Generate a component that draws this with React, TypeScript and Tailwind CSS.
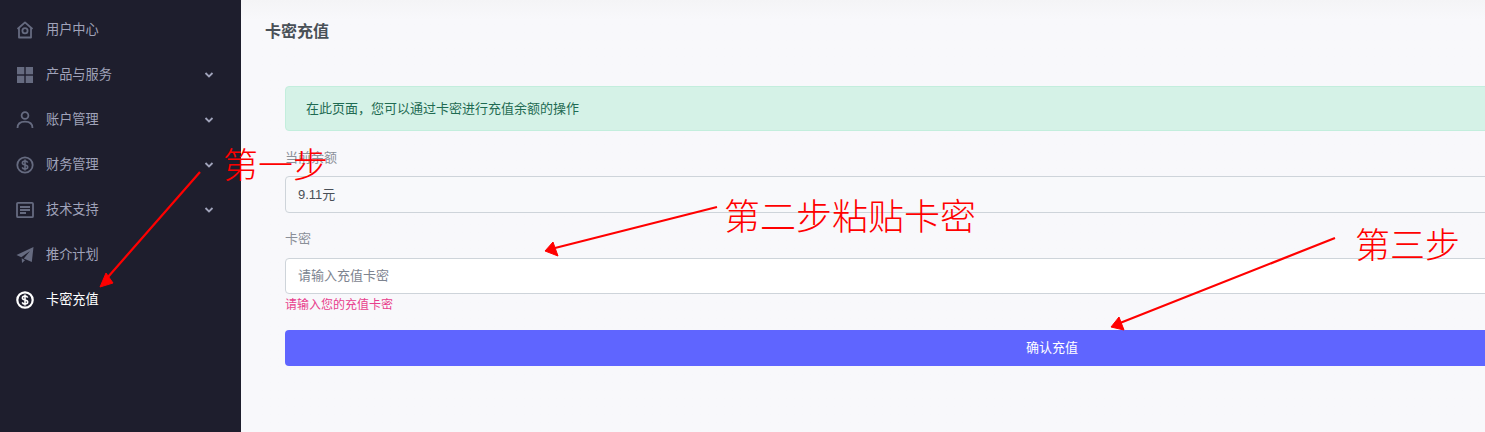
const FONT = "font-['Liberation_Sans','Noto_Sans_CJK_SC',sans-serif]";

function HomeIcon() {
  return (
    <svg width="18" height="18" viewBox="0 0 18 18" fill="none" stroke="currentColor" strokeWidth="1.800">
      <path d="M1.500 8 9 1.400 16.500 8M3 6.800V16.500H15V6.800" strokeLinejoin="round" />
      <circle cx="9" cy="9.800" r="2.600" />
    </svg>
  );
}

function GridIcon() {
  return (
    <svg width="18" height="18" viewBox="0 0 18 18" fill="currentColor">
      <rect x="1" y="1" width="7.300" height="7.300" />
      <rect x="9.700" y="1" width="7.300" height="7.300" />
      <rect x="1" y="9.700" width="7.300" height="7.300" />
      <rect x="9.700" y="9.700" width="7.300" height="7.300" />
    </svg>
  );
}

function UserIcon() {
  return (
    <svg width="18" height="18" viewBox="0 0 18 18" fill="none" stroke="currentColor" strokeWidth="1.800">
      <circle cx="9" cy="4.500" r="3.400" />
      <path d="M1.500 17c0-4.400 3.200-6.400 7.500-6.400s7.500 2 7.500 6.400" />
    </svg>
  );
}

function DollarIcon({ strokeWidth = 1.800 }: { strokeWidth?: number }) {
  return (
    <svg width="18" height="18" viewBox="0 0 18 18" fill="none" stroke="currentColor" strokeWidth={strokeWidth}>
      <circle cx="9" cy="9" r="7.700" />
      <path
        d="M11.700 6.600C11.200 5.500 10.200 5 9 5 7.500 5 6.400 5.800 6.400 7c0 2.700 5.300 1.300 5.300 4 0 1.200-1.100 2-2.700 2-1.300 0-2.300-.6-2.800-1.700M9 3.600v10.800"
        strokeWidth="1.600"
      />
    </svg>
  );
}

function ArticleIcon() {
  return (
    <svg width="18" height="18" viewBox="0 0 18 18" fill="none" stroke="currentColor" strokeWidth="1.800">
      <rect x="1" y="1.800" width="16" height="14.400" rx="1" />
      <path d="M4 6h10M4 9h10M4 12h6" />
    </svg>
  );
}

function SendIcon() {
  return (
    <svg width="18" height="18" viewBox="0 0 18 18" fill="currentColor">
      <path d="M17.500 1 .5 9l4.800 2.200L14 5l-6.200 7.500 8 3.500L17.500 1ZM5.700 12.200 6 17l3-2.800-3.300-2Z" />
    </svg>
  );
}

function Chevron() {
  return (
    <svg width="10" height="6" viewBox="0 0 10 6" fill="none" stroke="currentColor" strokeWidth="1.800">
      <path d="m1.500 1 3.500 3.500L8.500 1" />
    </svg>
  );
}

const NAV_ITEMS = [
  { label: "用户中心", icon: <HomeIcon />, arrow: false },
  { label: "产品与服务", icon: <GridIcon />, arrow: true },
  { label: "账户管理", icon: <UserIcon />, arrow: true },
  { label: "财务管理", icon: <DollarIcon />, arrow: true },
  { label: "技术支持", icon: <ArticleIcon />, arrow: true },
  { label: "推介计划", icon: <SendIcon />, arrow: false },
];

function Sidebar() {
  return (
    <aside className="flex w-[241px] shrink-0 flex-col bg-[#1e1e2d] pt-[7px]">
      {NAV_ITEMS.map(({ label, icon, arrow }) => (
        <div key={label} className="flex h-[45px] items-center pl-[16px] pr-[27px]">
          <span className="flex w-[30px] text-[#666b80]">{icon}</span>
          <span className="flex-1 text-[13.2px] text-[#a0a3ba]">{label}</span>
          {arrow && (
            <span className="text-[#a0a3ba]">
              <Chevron />
            </span>
          )}
        </div>
      ))}
      <div className="flex h-[45px] items-center pl-[16px]">
        <span className="flex w-[30px] text-white">
          <DollarIcon strokeWidth={2.200} />
        </span>
        <span className="text-[13.2px] text-white">卡密充值</span>
      </div>
    </aside>
  );
}

function Form() {
  return (
    <div className="w-[1554px] pl-[20px] pt-[43px]">
      <div className="flex h-[45px] items-center rounded border border-[#c3eedd] bg-[#d5f2e7] pl-[20px] text-[13px] text-[#1f6b52]">
        {"在此页面\uFF0C您可以通过卡密进行充值余额的操作"}
      </div>
      <label className="mt-[18px] block text-[13px] leading-[18px] text-[#8a8f98]">当前余额</label>
      <div className="mt-[9px] flex h-[37px] items-center rounded border border-[#ced4da] bg-[#f8f9fb] pl-[12px] text-[13px] text-[#495057]">
        9.11元
      </div>
      <label className="mt-[17px] block text-[13px] leading-[18px] text-[#8a8f98]">卡密</label>
      <input
        placeholder="请输入充值卡密"
        className="mt-[10px] block h-[36px] w-full rounded border border-[#ced4da] bg-white pb-[2px] pl-[12px] text-[13px] text-[#495057] placeholder:text-[#7d8490]"
      />
      <p className="mt-[2px] text-[12px] leading-[18px] text-[#e83e8c]">请输入您的充值卡密</p>
      <button className="mt-[16px] block h-[36px] w-full rounded bg-[#5f65ff] pb-[1px] text-[13px] text-white">
        确认充值
      </button>
    </div>
  );
}

// red notes drawn over the screenshot
function Annotations() {
  return (
    <div className="pointer-events-none absolute inset-0 font-['Liberation_Serif','Noto_Sans_CJK_SC',serif] font-light text-[#ff0000]">
      <svg width="1485" height="432" className="absolute left-0 top-0" fill="#ff0000">
        <path d="M200 172 108 277M717 207 555 248M1335 238 1120 323" strokeWidth="2.200" stroke="#ff0000" fill="none" />
        <path d="M100 287 106 273 113 283Z" stroke="#ff0000" />
        <path d="M545 251 553 242 558 256Z" stroke="#ff0000" />
        <path d="M1111 327 1119 317 1124 330Z" stroke="#ff0000" />
      </svg>
      <span className="absolute left-[223px] top-[146px] text-[35px] leading-[42px]">第一步</span>
      <span className="absolute left-[724px] top-[197px] text-[36px] leading-[42px]">第二步粘贴卡密</span>
      <span className="absolute left-[1355px] top-[226px] text-[35px] leading-[42px]">第三步</span>
    </div>
  );
}

export default function App() {
  return (
    <div className={`relative flex h-[432px] w-[1485px] overflow-hidden bg-[#f8f8fb] ${FONT}`}>
      <Sidebar />
      <main className="min-w-0 flex-1 bg-gradient-to-b from-[#f4f4f6] to-[#f8f8fb] to-[20px] pl-[24px] pt-[21px]">
        <h1 className="text-[16px] font-bold leading-[22px] text-[#495057]">卡密充值</h1>
        <Form />
      </main>
      <Annotations />
    </div>
  );
}
